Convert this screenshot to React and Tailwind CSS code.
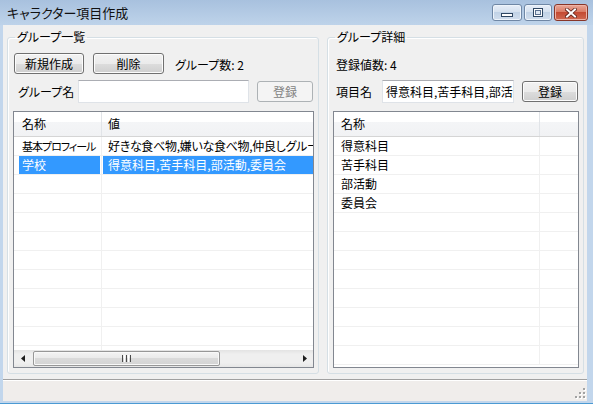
import React from "react";

const leftRows = [
  { name: "基本プロフィール", value: "好きな食べ物,嫌いな食べ物,仲良しグループ", tight: true },
  { name: "学校", value: "得意科目,苦手科目,部活動,委員会", selected: true },
];

const rightRows = ["得意科目", "苦手科目", "部活動", "委員会"];

function Button({ className = "", disabled = false, children }) {
  return (
    <div
      className={`h-[21px] flex items-center justify-center rounded-[3px] border ${
        disabled
          ? "border-[#adb2b5] bg-[#f4f4f4] text-[#838383]"
          : "border-[#707070] bg-[linear-gradient(#f2f2f2,#ebebeb_50%,#dddddd_50%,#cfcfcf)] shadow-[inset_0_0_0_1px_#fcfcfc]"
      } ${className}`}
    >
      {children}
    </div>
  );
}

function TextBox({ className = "", children }) {
  return (
    <div
      className={`h-[23px] bg-white border border-[#dfe3e8] border-t-[#abadb3] flex items-center pl-[3px] overflow-hidden whitespace-nowrap ${className}`}
    >
      {children}
    </div>
  );
}

function GroupBox({ title, className = "", children }) {
  return (
    <fieldset
      className={`h-[344px] border border-[#d5dfe5] rounded-[3px] shadow-[inset_1px_1px_0_#fff] ${className}`}
    >
      <legend className="ml-[7px] px-[2px] leading-[14px]">{title}</legend>
      {children}
    </fieldset>
  );
}

function HScrollbar() {
  return (
    <div className="h-[17px] shrink-0 flex items-center bg-[linear-gradient(#e3e3e3,#efefef_25%,#efefef_75%,#e6e6e6)]">
      <div className="w-[17px] h-full flex items-center justify-center">
        <svg width="4" height="7" viewBox="0 0 4 7">
          <polygon points="4,0 0,3.5 4,7" fill="#1e1e1e" />
        </svg>
      </div>
      <div className="flex-1 h-full flex items-center">
        <div className="ml-[2px] w-[187px] h-[15px] rounded-[2px] border border-[#979797] bg-[linear-gradient(#f4f4f4,#e9e9e9_50%,#dadada_50%,#d4d4d4)] shadow-[inset_0_0_0_1px_#f8f8f8] flex items-center justify-center gap-[1px]">
          <div className="w-[1px] h-[7px] bg-[#4a4a4a]" />
          <div className="w-[1px] h-[7px] bg-white" />
          <div className="w-[1px] h-[7px] bg-[#4a4a4a]" />
          <div className="w-[1px] h-[7px] bg-white" />
          <div className="w-[1px] h-[7px] bg-[#4a4a4a]" />
        </div>
      </div>
      <div className="w-[17px] h-full flex items-center justify-center">
        <svg width="4" height="7" viewBox="0 0 4 7">
          <polygon points="0,0 4,3.5 0,7" fill="#1e1e1e" />
        </svg>
      </div>
    </div>
  );
}

export default function App() {
  const leftAll = [...leftRows, ...Array.from({ length: 10 }, () => null)];
  const rightAll = [...rightRows, ...Array.from({ length: 8 }, () => null)];

  return (
    <div className="w-[593px] h-[404px] flex flex-col bg-[#c2d6ec] border-b border-[#4b9ad3] font-['Noto_Sans_CJK_JP',sans-serif] text-[12px] text-black [font-feature-settings:'palt'] select-none overflow-hidden">
      {/* Title bar */}
      <div className="h-[25px] shrink-0 flex items-center bg-[linear-gradient(#a8c1de,#bed3ea)] pl-[7px] pr-[5px]">
        <span className="leading-none text-[13px] text-[#111]">キャラクター項目作成</span>
        <div className="ml-auto flex gap-[2px] h-[17px]">
          <div className="w-[30px] h-full rounded-[3px] border border-[#6f87a5] bg-[linear-gradient(#e7eef8,#d4e0ee_50%,#c1d2e6_50%,#d2deed)] shadow-[inset_0_0_0_1px_#eef4fb] flex items-end justify-center pb-[3px]">
            <div className="w-[12px] h-[4px] border border-[#2f4763] bg-white" />
          </div>
          <div className="w-[28px] h-full rounded-[3px] border border-[#6f87a5] bg-[linear-gradient(#e7eef8,#d4e0ee_50%,#c1d2e6_50%,#d2deed)] shadow-[inset_0_0_0_1px_#eef4fb] flex items-center justify-center">
            <div className="w-[10px] h-[9px] border border-[#2f4763] bg-white p-[1px]">
              <div className="w-full h-full border border-[#5b7190] bg-[#dde7f2]" />
            </div>
          </div>
          <div className="w-[34px] h-full rounded-[3px] border border-[#883628] bg-[linear-gradient(#e9a798,#d8775f_50%,#c44a32_50%,#d06a52)] shadow-[inset_0_0_0_1px_#eeb3a6] flex items-center justify-center">
            <svg width="12" height="10" viewBox="0 0 12 10">
              <path d="M2 1.5 L10 8.5 M10 1.5 L2 8.5" stroke="#5a2018" strokeWidth="3.6" strokeLinecap="square" />
              <path d="M2 1.5 L10 8.5 M10 1.5 L2 8.5" stroke="#ffffff" strokeWidth="2" strokeLinecap="square" />
            </svg>
          </div>
        </div>
      </div>

      {/* Client */}
      <div className="flex-1 ml-[3px] mr-[6px] mb-[2px] bg-[#f0f0f0] flex flex-col">
        <div className="h-[354px] shrink-0 flex gap-[8px] pl-[4px] pt-[5px]">
          {/* Left group */}
          <GroupBox title="グループ一覧" className="w-[312px]">
            <div className="mt-[9px] ml-[6px] h-[21px] flex items-center gap-[9px]">
              <Button className="w-[70px]">新規作成</Button>
              <Button className="w-[71px]">削除</Button>
              <span className="ml-[2px] pt-[3px]">グループ数: 2</span>
            </div>
            <div className="mt-[6px] h-[23px] flex items-center">
              <span className="ml-[10px] w-[60px]">グループ名</span>
              <TextBox className="w-[171px]" />
              <Button disabled className="ml-[8px] w-[56px]">
                登録
              </Button>
            </div>
            <div className="mt-[8px] ml-[5px] w-[301px] h-[257px] border border-[#828790] bg-white flex flex-col overflow-hidden">
              <div className="h-[25px] shrink-0 flex border-b border-[#d5d5d5] bg-[linear-gradient(#ffffff,#ffffff_40%,#f4f5f7_40%,#f1f2f4)]">
                <div className="w-[88px] border-r border-[#e1e4e8] pl-[8px] flex items-center">名称</div>
                <div className="flex-1 pl-[6px] flex items-center">値</div>
              </div>
              <div className="flex-1 overflow-hidden">
                {leftAll.map((r, i) => (
                  <div key={i} className="h-[19px] flex border-b border-[#f0f0f0]">
                    <div className="w-[88px] shrink-0 border-r border-[#f0f0f0] pl-[5px] pr-[1px] flex">
                      <div
                        className={`flex-1 pl-[3px] flex items-center whitespace-nowrap overflow-hidden ${
                          r && r.selected ? "bg-[#3399ff] text-white" : ""
                        } ${r && r.tight ? "text-[11px] tracking-[-1px]" : ""}`}
                      >
                        {r ? r.name : ""}
                      </div>
                    </div>
                    <div className="flex-1 pl-[1px] flex overflow-hidden">
                      <div
                        className={`flex-1 pl-[5px] flex items-center whitespace-nowrap overflow-hidden ${
                          r && r.selected ? "bg-[#3399ff] text-white" : ""
                        } ${r && r.tight ? "tracking-[-0.3px]" : ""}`}
                      >
                        {r ? r.value : ""}
                      </div>
                    </div>
                  </div>
                ))}
              </div>
              <HScrollbar />
            </div>
          </GroupBox>

          {/* Right group */}
          <GroupBox title="グループ詳細" className="w-[257px]">
            <div className="mt-[9px] ml-[8px] h-[21px] flex items-center">
              <span className="pt-[3px]">登録値数: 4</span>
            </div>
            <div className="mt-[6px] h-[23px] flex items-center">
              <span className="ml-[8px] w-[46px]">項目名</span>
              <TextBox className="w-[132px]">得意科目,苦手科目,部活動,委員会</TextBox>
              <Button className="ml-[8px] w-[56px]">登録</Button>
            </div>
            <div className="mt-[8px] ml-[5px] w-[246px] h-[257px] border border-[#828790] bg-white flex flex-col overflow-hidden">
              <div className="h-[25px] shrink-0 flex border-b border-[#d5d5d5] bg-[linear-gradient(#ffffff,#ffffff_40%,#f4f5f7_40%,#f1f2f4)]">
                <div className="w-[206px] border-r border-[#e1e4e8] pl-[7px] flex items-center">名称</div>
                <div className="flex-1" />
              </div>
              <div className="flex-1 overflow-hidden">
                {rightAll.map((name, i) => (
                  <div key={i} className="h-[19px] flex border-b border-[#f0f0f0]">
                    <div className="w-[206px] border-r border-[#f0f0f0] pl-[7px] flex items-center">
                      {name || ""}
                    </div>
                    <div className="flex-1" />
                  </div>
                ))}
              </div>
            </div>
          </GroupBox>
        </div>

        {/* Status bar */}
        <div className="flex-1 border-t border-[#a0a0a0] bg-[#f0edeb] shadow-[inset_0_1px_0_#fff] flex items-end justify-end pr-[1px] pb-[2px]">
          <svg width="11" height="11" viewBox="0 0 11 11">
            {[
              [8, 0],
              [8, 4],
              [4, 4],
              [8, 8],
              [4, 8],
              [0, 8],
            ].map(([x, y], i) => (
              <g key={i}>
                <rect x={x + 1} y={y + 1} width="2" height="2" fill="#ffffff" />
                <rect x={x} y={y} width="2" height="2" fill="#a2a2a2" />
              </g>
            ))}
          </svg>
        </div>
      </div>
    </div>
  );
}
